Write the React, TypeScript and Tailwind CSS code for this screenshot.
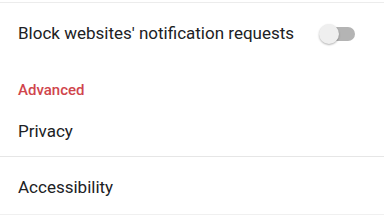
export default function App() {
  return (
    <div
      className="w-[384px] h-[216px] overflow-hidden bg-white text-[#202124]"
      style={{ fontFamily: "Roboto, 'Liberation Sans', sans-serif" }}
    >
      <div className="h-[2px]" />
      <div className="h-px bg-[#ececec]" />
      {/* toggle row */}
      <div className="flex items-center justify-between h-[61px] pl-[18px] pr-[29px]">
        <span className="text-[17px] leading-none">Block websites' notification requests</span>
        <div className="relative w-[36px] h-[20px] flex items-center">
          <div className="absolute left-[6px] right-0 h-[14px] rounded-full bg-[#b4b4b4]" />
          <div className="absolute left-0 w-[20px] h-[20px] rounded-full bg-[#efefef] shadow-[0_1px_2px_rgba(0,0,0,0.3)]" />
        </div>
      </div>
      {/* section header */}
      <div className="h-[52px] flex items-center pl-[18px]">
        <span className="text-[15px] font-medium leading-none text-[#d0454c]">Advanced</span>
      </div>
      <div className="h-[40px] flex items-center pl-[18px] pb-[9px]">
        <span className="text-[17px] leading-none">Privacy</span>
      </div>
      <div className="h-px bg-[#e6e6e6]" />
      <div className="h-[57px] flex items-center pl-[18px] pt-[3px]">
        <span className="text-[17px] leading-none">Accessibility</span>
      </div>
      <div className="h-px bg-[#f0f0f0]" />
    </div>
  );
}
